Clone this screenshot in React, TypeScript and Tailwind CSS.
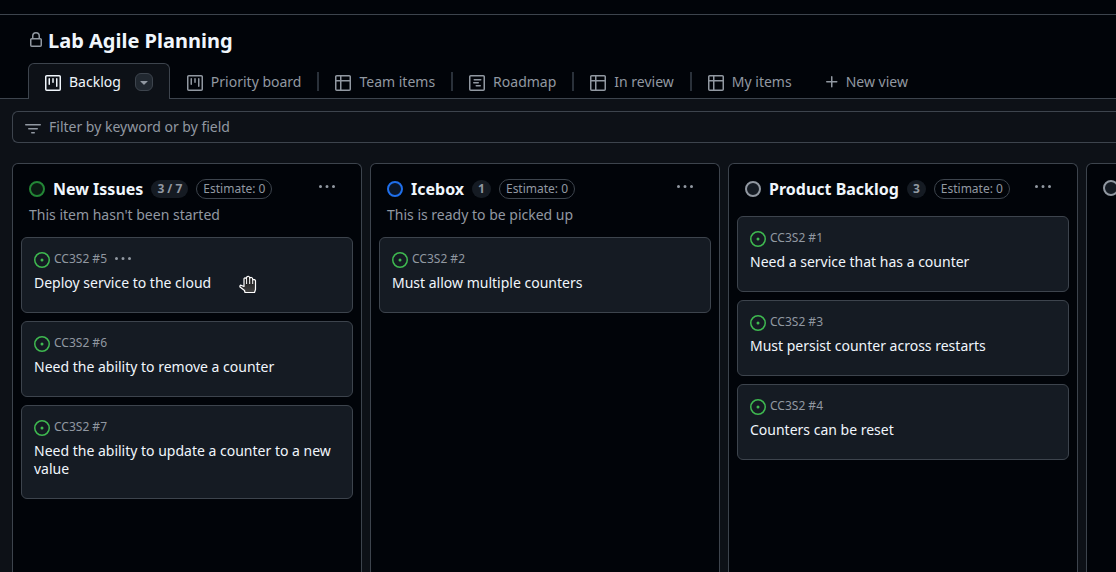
import React from "react";

const PATHS = {
  lock: "M4 4a4 4 0 0 1 8 0v2h.25c.966 0 1.75.784 1.75 1.75v5.5A1.75 1.75 0 0 1 12.25 15h-8.5A1.75 1.75 0 0 1 2 13.25v-5.5C2 6.784 2.784 6 3.75 6H4Zm8.25 3.5h-8.5a.25.25 0 0 0-.25.25v5.5c0 .138.112.25.25.25h8.5a.25.25 0 0 0 .25-.25v-5.5a.25.25 0 0 0-.25-.25ZM10.5 6V4a2.5 2.5 0 1 0-5 0v2Z",
  board: "M1.75 0h12.5C15.216 0 16 .784 16 1.75v12.5A1.75 1.75 0 0 1 14.25 16H1.75A1.75 1.75 0 0 1 0 14.25V1.75C0 .784.784 0 1.75 0ZM1.5 1.75v12.5c0 .138.112.25.25.25h12.5a.25.25 0 0 0 .25-.25V1.75a.25.25 0 0 0-.25-.25H1.75a.25.25 0 0 0-.25.25ZM11.75 3a.75.75 0 0 1 .75.75v7.5a.75.75 0 0 1-1.5 0v-7.5a.75.75 0 0 1 .75-.75Zm-8.25.75a.75.75 0 0 1 1.5 0v5.5a.75.75 0 0 1-1.5 0ZM8 3a.75.75 0 0 1 .75.75v3.5a.75.75 0 0 1-1.5 0v-3.5A.75.75 0 0 1 8 3Z",
  table: "M0 1.75C0 .784.784 0 1.75 0h12.5C15.216 0 16 .784 16 1.75v12.5A1.75 1.75 0 0 1 14.25 16H1.75A1.75 1.75 0 0 1 0 14.25ZM6.5 6.5v8h7.75a.25.25 0 0 0 .25-.25V6.5Zm8-1.5V1.75a.25.25 0 0 0-.25-.25H6.5V5Zm-13 1.5v7.75c0 .138.112.25.25.25H5v-8ZM5 5V1.5H1.75a.25.25 0 0 0-.25.25V5Z",
  roadmap: "M1.75 0h12.5C15.216 0 16 .784 16 1.75v12.5A1.75 1.75 0 0 1 14.25 16H1.75A1.75 1.75 0 0 1 0 14.25V1.75C0 .784.784 0 1.75 0ZM1.5 1.75v12.5c0 .138.112.25.25.25h12.5a.25.25 0 0 0 .25-.25V1.75a.25.25 0 0 0-.25-.25H1.75a.25.25 0 0 0-.25.25ZM5.25 4h6.5a.75.75 0 0 1 0 1.5h-6.5a.75.75 0 0 1 0-1.5ZM4.75 7h4.5a.75.75 0 0 1 0 1.5h-4.5a.75.75 0 0 1 0-1.5ZM7.25 10h4a.75.75 0 0 1 0 1.5h-4a.75.75 0 0 1 0-1.5Z",
  filter: "M.75 3h14.5a.75.75 0 0 1 0 1.5H.75a.75.75 0 0 1 0-1.5ZM3 7.75A.75.75 0 0 1 3.75 7h8.5a.75.75 0 0 1 0 1.5h-8.5A.75.75 0 0 1 3 7.75Zm3 4a.75.75 0 0 1 .75-.75h2.5a.75.75 0 0 1 0 1.5h-2.5a.75.75 0 0 1-.75-.75Z",
  plus: "M7.75 2a.75.75 0 0 1 .75.75V7h4.25a.75.75 0 0 1 0 1.5H8.5v4.25a.75.75 0 0 1-1.5 0V8.5H2.75a.75.75 0 0 1 0-1.5H7V2.75A.75.75 0 0 1 7.75 2Z",
  triangle: "m4.427 7.427 3.396 3.396a.25.25 0 0 0 .354 0l3.396-3.396A.25.25 0 0 0 11.396 7H4.604a.25.25 0 0 0-.177.427Z",
  kebab: "M8 9a1.5 1.5 0 1 0 0-3 1.5 1.5 0 0 0 0 3ZM1.5 9a1.5 1.5 0 1 0 0-3 1.5 1.5 0 0 0 0 3Zm13 0a1.5 1.5 0 1 0 0-3 1.5 1.5 0 0 0 0 3Z",
  issue: "M8 9.5a1.5 1.5 0 1 0 0-3 1.5 1.5 0 0 0 0 3ZM8 0a8 8 0 1 1 0 16A8 8 0 0 1 8 0ZM1.5 8a6.5 6.5 0 1 0 13 0 6.5 6.5 0 0 0-13 0Z",
};

type IconName = keyof typeof PATHS;

function Icon({ name, className = "" }: { name: IconName; className?: string }) {
  return (
    <svg viewBox="0 0 16 16" width="16" height="16" fill="currentColor" aria-hidden="true" className={`shrink-0 ${className}`}>
      <path d={PATHS[name]} />
    </svg>
  );
}

type Card = { id: number; title: string; active?: boolean };
type Column = { name: string; count: string; ring: string; note?: string; cards: Card[] };

const VIEWS: { label: string; icon: IconName }[] = [
  { label: "Priority board", icon: "board" },
  { label: "Team items", icon: "table" },
  { label: "Roadmap", icon: "roadmap" },
  { label: "In review", icon: "table" },
  { label: "My items", icon: "table" },
];

const COLUMNS: Column[] = [
  {
    name: "New Issues",
    count: "3 / 7",
    ring: "border-[#238636] bg-[#0a1a12]",
    note: "This item hasn't been started",
    cards: [
      { id: 5, title: "Deploy service to the cloud", active: true },
      { id: 6, title: "Need the ability to remove a counter" },
      { id: 7, title: "Need the ability to update a counter to a new value" },
    ],
  },
  {
    name: "Icebox",
    count: "1",
    ring: "border-[#1f6feb] bg-[#0a1628]",
    note: "This is ready to be picked up",
    cards: [{ id: 2, title: "Must allow multiple counters" }],
  },
  {
    name: "Product Backlog",
    count: "3",
    ring: "border-[#9198a1] bg-[#151b23]",
    cards: [
      { id: 1, title: "Need a service that has a counter" },
      { id: 3, title: "Must persist counter across restarts" },
      { id: 4, title: "Counters can be reset" },
    ],
  },
];

function GrabHand() {
  return (
    <svg viewBox="0 0 18 19" width="18" height="19" aria-hidden="true" className="absolute top-[37px] left-[217px]">
      <defs>
        <linearGradient id="palm" x1="0" y1="0" x2="0" y2="1">
          <stop offset="0" stopColor="#111" />
          <stop offset="1" stopColor="#444" />
        </linearGradient>
      </defs>
      <path
        d="M6 17.5 L5.5 15.5 L1 12 Q0.5 10.5 2 10.2 L5 11.5 L5 3.5 Q6 2.2 7.3 3.5 L7.8 2 Q9.2 .5 10.4 2 L10.8 3 Q12.3 1.8 13.5 3.3 L13.8 4.8 Q15.8 4 16.5 5.8 L16.5 14.5 L15.5 17.5 Z"
        fill="url(#palm)"
        stroke="#fff"
        strokeWidth="1.2"
        strokeLinejoin="round"
      />
      <path d="M7.6 3.5V9 M10.7 3V9 M13.7 4.5V9" stroke="#fff" strokeWidth="1" />
    </svg>
  );
}

function IssueCard({ card }: { card: Card }) {
  return (
    <li className="relative min-h-19 rounded-md border border-[#3d444d] bg-[#151b23] px-3 pt-3 pb-5">
      <div className="flex h-[18px] items-center gap-1 text-xs text-[#9198a1]">
        <Icon name="issue" className="mt-0.5 text-[#3fb950]" />
        <span>CC3S2 #{card.id}</span>
        {card.active && (
          <button type="button" aria-label="Card actions" className="ml-1">
            <Icon name="kebab" />
          </button>
        )}
      </div>
      <a href="#" className="mt-1.5 block text-sm leading-[18px] text-[#f0f6fc]">
        {card.title}
      </a>
      {card.active && <GrabHand />}
    </li>
  );
}

function BoardColumn({ column }: { column: Column }) {
  return (
    <section className="w-[350px] shrink-0 rounded-t-md border border-b-0 border-[#3d444d] bg-[#010409] px-2">
      <header className="px-2 pt-3">
        <div className="flex h-[25px] items-center">
          <span className={`size-4 shrink-0 rounded-full border-2 ${column.ring}`} />
          <h2 className="ml-2 text-base font-bold text-[#f0f6fc]">{column.name}</h2>
          <span className="ml-2 rounded-full bg-[#151b23] px-1.5 text-xs leading-[18px] font-bold text-[#9198a1]">{column.count}</span>
          <span className="ml-2 rounded-full border border-[#3d444d] px-1.5 text-xs leading-[18px] text-[#9198a1]">Estimate: 0</span>
          <button type="button" aria-label="Column actions" className="mr-2.5 mb-1 ml-auto text-[#9198a1]">
            <Icon name="kebab" />
          </button>
        </div>
        {column.note && <p className="mt-1 text-sm leading-5 text-[#9198a1]">{column.note}</p>}
      </header>
      <ul className={`flex flex-col gap-2 ${column.note ? "mt-3" : "mt-[15px]"}`}>
        {column.cards.map((card) => (
          <IssueCard key={card.id} card={card} />
        ))}
      </ul>
    </section>
  );
}

export default function App() {
  return (
    <div className="flex min-h-screen flex-col overflow-hidden bg-[#0d1117] font-['Noto_Sans',sans-serif] text-sm text-[#f0f6fc]">
      <div className="h-[15px] border-b border-[#3d444d] bg-[#010409]" />
      <div className="bg-[#010409]">
        <div className="flex h-12 items-center gap-1 px-7 pt-1">
          <Icon name="lock" className="mb-0.5 text-[#9198a1]" />
          <h1 className="text-xl font-bold">Lab Agile Planning</h1>
        </div>
        <nav aria-label="Views" className="flex h-9 border-b border-[#3d444d] px-7">
          <div className="-mb-px flex items-center rounded-t-md border border-b-0 border-[#3d444d] bg-[#0d1117] px-4">
            <a href="#" aria-current="page" className="flex items-center gap-2">
              <Icon name="board" className="mt-0.5" />
              Backlog
            </a>
            <button type="button" aria-label="View options" className="ml-3.5 flex size-[18px] items-center justify-center rounded-md border border-[#3d444d] bg-[#212830] text-[#9198a1]">
              <Icon name="triangle" />
            </button>
          </div>
          {VIEWS.map((view, i) => (
            <div key={view.label} className="flex items-center pt-0.5">
              {i > 0 && <span className="h-[19px] w-0.5 bg-[#2a313a]" />}
              <a href="#" className={`flex items-center gap-2 pr-4 text-[#9198a1] ${i > 0 ? "pl-4" : "pl-[17px]"}`}>
                <Icon name={view.icon} className="mt-0.5" />
                {view.label}
              </a>
            </div>
          ))}
          <button type="button" className="flex items-center gap-1.5 pt-0.5 pl-4 text-[#9198a1]">
            <Icon name="plus" />
            New view
          </button>
        </nav>
      </div>
      <div className="pt-3 pl-3">
        <label className="flex h-8 items-center gap-2 rounded-l-md border border-r-0 border-[#3d444d] pl-3">
          <Icon name="filter" className="mt-1 text-[#9198a1]" />
          <input
            type="text"
            aria-label="Filter by keyword or by field"
            placeholder="Filter by keyword or by field"
            className="min-w-0 flex-1 bg-transparent outline-none placeholder:text-[#9198a1]"
          />
        </label>
      </div>
      <main className="mt-5 flex flex-1 gap-2 overflow-hidden pl-3">
        {COLUMNS.map((column) => (
          <BoardColumn key={column.name} column={column} />
        ))}
        <section className="w-[350px] shrink-0 rounded-t-md border border-b-0 border-[#3d444d] bg-[#010409] px-4 pt-4">
          <span className="block size-4 rounded-full border-2 border-[#9198a1] bg-[#151b23]" />
        </section>
      </main>
    </div>
  );
}
